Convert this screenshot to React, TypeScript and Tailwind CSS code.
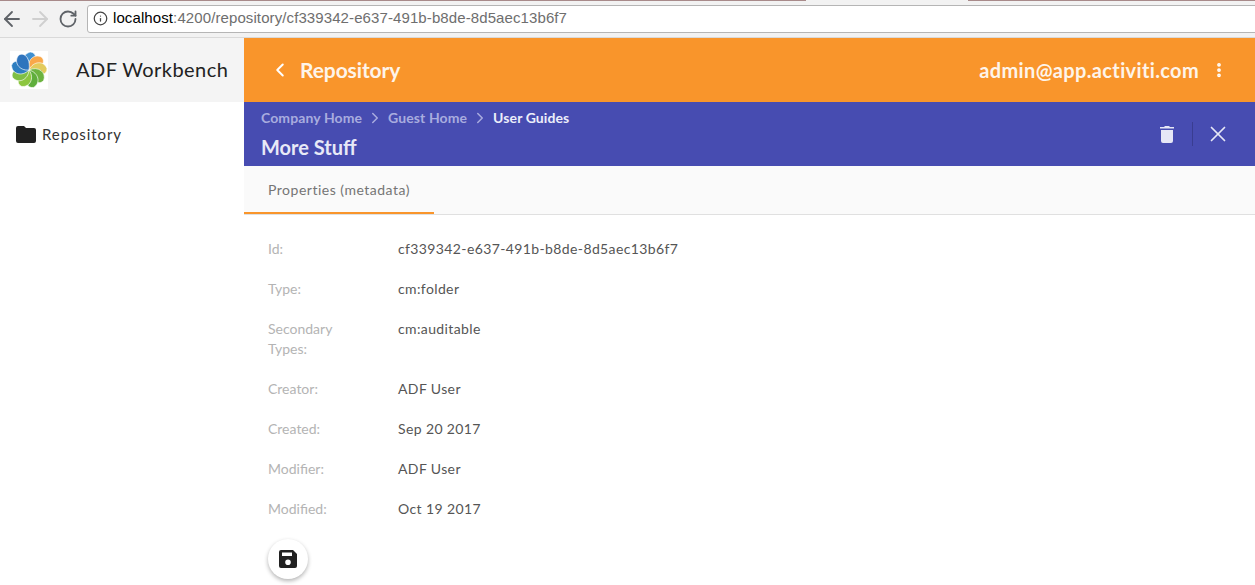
import { ArrowLeft, ArrowRight, RotateCw, Info, ChevronLeft, ChevronRight, EllipsisVertical, X } from "lucide-react";

const sans = "font-['Lato','Liberation_Sans',sans-serif]";

const properties = [
  { label: "Id:", value: "cf339342-e637-491b-b8de-8d5aec13b6f7" },
  { label: "Type:", value: "cm:folder" },
  { label: "Secondary Types:", value: "cm:auditable" },
  { label: "Creator:", value: "ADF User" },
  { label: "Created:", value: "Sep 20 2017" },
  { label: "Modifier:", value: "ADF User" },
  { label: "Modified:", value: "Oct 19 2017" },
];

function Logo() {
  // petals clockwise from the top, last one drawn overlaps the one before
  const colors = ["#3f8fd0", "#f9a84a", "#e3cb5c", "#6cb33f", "#5fae3c", "#8cc63f", "#7fbf45", "#2f7fc1", "#2f74bd"];
  return (
    <div className="flex h-[38px] w-[38px] items-center justify-center bg-white">
      <svg viewBox="-19 -19 38 38" className="h-[38px] w-[38px]">
        {colors.map((color, i) => (
          <path
            key={i}
            d="M0 0C-9 -5 -8 -16 0 -18C7 -18 8 -8 0 0Z"
            fill={color}
            stroke="#ffffff"
            strokeWidth="0.6"
            transform={`rotate(${i * 40 + 5})`}
          />
        ))}
      </svg>
    </div>
  );
}

export default function App() {
  return (
    <div className={`flex h-[585px] w-[1255px] flex-col overflow-hidden bg-white ${sans}`}>
      {/* Browser chrome */}
      <div className="relative flex h-[38px] shrink-0 items-center overflow-hidden border-b border-[#d9d9d9] bg-[#f2f2f2]">
        <div className="absolute left-0 top-0 h-px w-[806px] bg-[#a88a8a]" />
        <div className="absolute left-[968px] right-0 top-0 h-px bg-[#a88a8a]" />
        <ArrowLeft size={24} strokeWidth={1.8} className="shrink-0 text-[#5f6368]" />
        <ArrowRight size={24} strokeWidth={1.8} className="ml-1 shrink-0 text-[#cfcfcf]" />
        <RotateCw size={20} strokeWidth={2.2} className="ml-[6px] shrink-0 text-[#5f6368]" />
        <div className="ml-[9px] flex h-[28px] w-[1190px] shrink-0 items-center rounded-[3px] border border-[#b5b5b5] bg-white pl-[5px] font-['Liberation_Sans',sans-serif] text-[15px] tracking-[0.1px]">
          <Info size={15} className="shrink-0 text-[#444444]" />
          <span className="ml-[5px] text-black">localhost</span>
          <span className="text-[#6e6e6e]">:4200/repository/cf339342-e637-491b-b8de-8d5aec13b6f7</span>
        </div>
      </div>

      <div className="flex min-h-0 flex-1">
        {/* Sidebar */}
        <aside className="w-[244px] shrink-0">
          <div className="flex h-[64px] items-center bg-[#f4f4f4] pl-[10px]">
            <Logo />
            <span className="mb-[2px] ml-[28px] text-[20px] tracking-[0.45px] text-[#222222]">ADF Workbench</span>
          </div>
          <div className="flex items-center pl-4 pt-[21px]">
            <svg viewBox="0 0 20 17" className="h-[17px] w-[20px] fill-[#212121]">
              <path d="M2 0h6l2 2h8a2 2 0 0 1 2 2v11a2 2 0 0 1-2 2H2a2 2 0 0 1-2-2V2a2 2 0 0 1 2-2Z" />
            </svg>
            <span className="ml-[6px] text-[15px] tracking-[0.9px] text-[#333333]">Repository</span>
          </div>
        </aside>

        <main className="flex min-w-0 flex-1 flex-col">
          {/* App toolbar */}
          <div className="flex h-[64px] items-center justify-between bg-[#f9952b] pl-[25px] pr-[31px] text-white">
            <div className="flex items-center">
              <ChevronLeft size={22} strokeWidth={2.2} />
              <span className="mb-[1px] ml-[9px] text-[21px] font-bold tracking-[-0.1px] opacity-90">Repository</span>
            </div>
            <div className="flex items-center">
              <span className="mb-[1px] text-[20px] font-bold tracking-[0.35px] opacity-90">admin@app.activiti.com</span>
              <EllipsisVertical size={18} strokeWidth={3} className="ml-[11px] mr-[-4px]" />
            </div>
          </div>

          {/* Info drawer header */}
          <div className="flex h-[64px] items-center justify-between bg-[#474cb1] pl-[17px] pr-[24px]">
            <div className="pt-[2px]">
              <div className="mt-[-2px] flex items-center text-[14px] font-bold tracking-[0.1px] text-[#a9acdf]">
                <span>Company Home</span>
                <ChevronRight size={18} className="mx-[4px]" />
                <span>Guest Home</span>
                <ChevronRight size={18} className="mx-[4px]" />
                <span className="text-[#eceefa]">User Guides</span>
              </div>
              <div className="mt-[5px] text-[20px] font-bold leading-7 text-[#e8e9f7]">More Stuff</div>
            </div>
            <div className="flex items-center text-[#e6e7f6]">
              <svg viewBox="0 0 14 18" className="h-[18px] w-[14px] fill-current">
                <path d="M1 5h12v11a2 2 0 0 1-2 2H3a2 2 0 0 1-2-2ZM0 2h4l1-1h4l1 1h4v1.500H0Z" />
              </svg>
              <div className="ml-[18px] h-[24px] w-px bg-[#393d91]" />
              <X size={26} strokeWidth={1.6} className="ml-[12px]" />
            </div>
          </div>

          {/* Tabs */}
          <div className="flex h-[49px] border-b border-[#e0e0e0] bg-[#fafafa]">
            <div className="flex w-[190px] items-center justify-center border-b-2 border-[#f9952b] text-[14px] tracking-[0.5px] text-[#757575]">
              Properties (metadata)
            </div>
          </div>

          {/* Properties */}
          <div className="flex flex-col gap-[20px] pl-6 pt-6 text-[14px] leading-5">
            {properties.map((prop) => (
              <div key={prop.label} className="flex">
                <div className="w-[130px] pr-[45px] text-[#b4b4b4]">{prop.label}</div>
                <div className="tracking-[0.38px] text-[#555555]">{prop.value}</div>
              </div>
            ))}
            <button className="flex h-10 w-10 items-center justify-center rounded-full bg-white shadow-[0_2px_4px_rgba(0,0,0,0.3)]">
              <svg viewBox="0 0 18 18" className="h-[18px] w-[18px] fill-[#212121]">
                <path d="M2 0h12l4 4v12a2 2 0 0 1-2 2H2a2 2 0 0 1-2-2V2a2 2 0 0 1 2-2Zm1 2.500v3.500h10V2.500ZM9 9.500a2.800 2.800 0 1 0 0 5.600 2.800 2.800 0 0 0 0-5.600Z" fillRule="evenodd" />
              </svg>
            </button>
          </div>
        </main>
      </div>
    </div>
  );
}
